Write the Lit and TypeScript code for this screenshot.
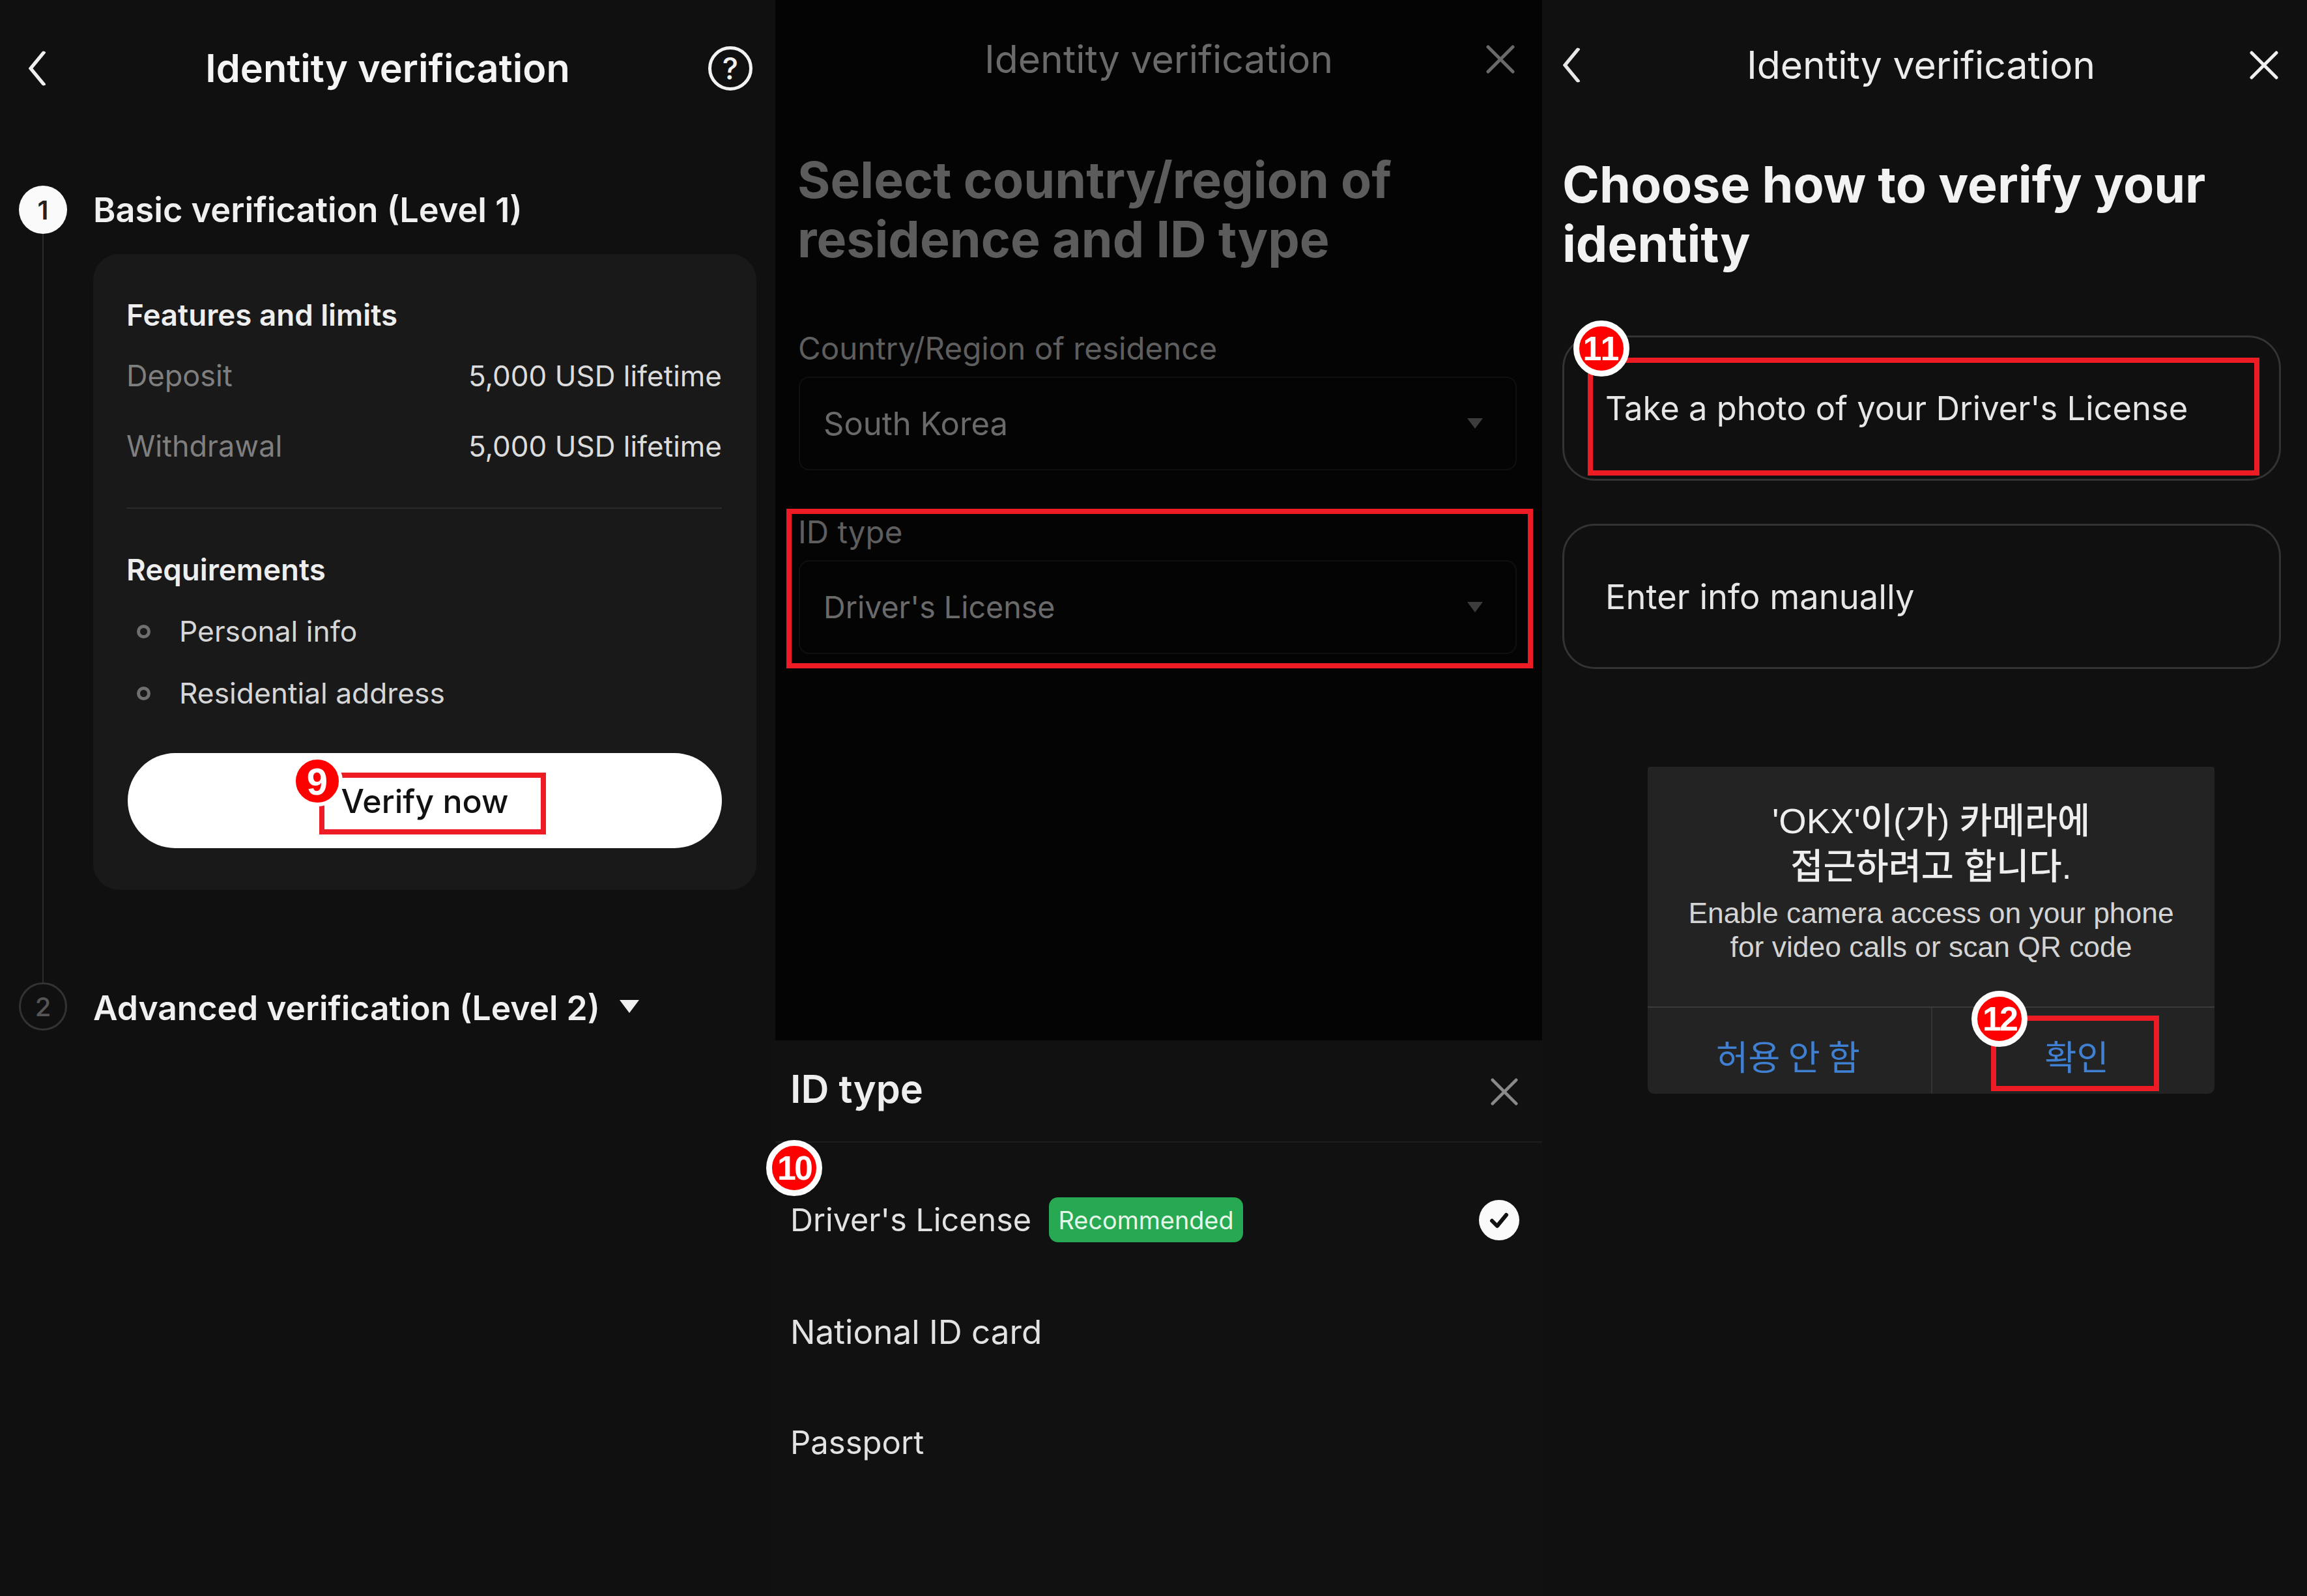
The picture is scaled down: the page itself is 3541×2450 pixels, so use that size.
import { LitElement, html, css, svg } from "lit";
import { customElement } from "lit/decorators.js";

const chevron = svg`<polyline points="24,4 4,39 24,74" fill="none" stroke="currentColor" stroke-width="6" stroke-linecap="round" stroke-linejoin="round"/>`;
const cross = svg`<path d="M3 3 L41 41 M41 3 L3 41" fill="none" stroke="currentColor" stroke-width="5" stroke-linecap="round"/>`;

@customElement("app-root")
export class AppRoot extends LitElement {
  static styles = css`
    :host { display: block; width: 3541px; height: 2450px; overflow: hidden; background: #101010; }
    * { box-sizing: border-box; }
    .root { position: relative; display: flex; width: 3541px; height: 2450px;
      font-family: Inter, "Noto Sans", sans-serif; color: #e8e8e8; }
    .panel { height: 100%; display: flex; flex-direction: column; }
    .p1 { width: 1190px; background: #101010; }
    .p2 { width: 1177px; background: #111; }
    .p3 { width: 1174px; background: #101010; }

    .hdr { display: grid; grid-template-columns: 1fr auto 1fr; align-items: center; flex: none; }
    .hdr .t { font-size: 58.9px; line-height: 70px; white-space: nowrap; text-align: center; }
    .end { justify-self: end; display: flex; }
    .start { justify-self: start; display: flex; }

    /* panel 1 */
    .h1 { height: 210px; padding: 0 37px; color: #f4f4f4; }
    .h1 .t { font-size: 59.4px; font-weight: 600; margin-bottom: 3px; }
    .back1 { width: 28px; height: 54px; margin-left: 6px; color: #f0f0f0; }
    .help { width: 68px; height: 68px; margin-right: -2px; border-radius: 50%; border: 5px solid #f2f2f2; color: #f2f2f2;
      display: flex; align-items: center; justify-content: center; font-size: 46px; font-weight: 500; line-height: 1; }
    .steps { padding: 75px 29px 0; }
    .stephead { display: flex; align-items: center; gap: 40px; height: 74px; }
    .num { width: 74px; height: 74px; border-radius: 50%; flex: none; display: flex; align-items: center; justify-content: center;
      font-size: 40px; font-weight: 600; }
    .num.on { background: #fafafa; color: #222; }
    .num.off { border: 3px solid #333; color: #555; font-weight: 500; }
    .steptitle { font-size: 52.3px; font-weight: 600; line-height: 60px; color: #f0f0f0; white-space: nowrap; }
    .steptitle.low { font-size: 51.6px; padding-top: 3px; }
    .stepbody { margin-left: 36px; border-left: 2px solid #2b2b2b; padding: 31px 0 142px 76px; }
    .card { background: #191919; border-radius: 40px; padding: 64px 53px 64px 51px; }
    .ch { font-size: 45.7px; font-weight: 600; line-height: 60px; color: #eee; white-space: nowrap; }
    .kv { display: flex; justify-content: space-between; font-size: 44px; line-height: 60px; color: #dcdcdc; }
    .kv .k { color: #7f7f7f; font-size: 45px; }
    .kv.a { margin-top: 33px; margin-bottom: 2px; }
    .kv.b { margin-top: 48px; }
    .rule { height: 2px; background: #2a2a2a; margin: 64px 0; }
    .li { display: flex; align-items: center; font-size: 44.3px; line-height: 60px; color: #d6d6d6; }
    .li.a { margin-top: 34px; }
    .li.b { margin-top: 35px; }
    .dot { width: 21px; height: 21px; border-radius: 50%; border: 5px solid #6f6f6f; margin: 0 44px 0 16px; flex: none; }
    .verify { margin: 62px 0 0 2px; height: 146px; border-radius: 73px; background: #fff; color: #111;
      display: flex; align-items: center; justify-content: center; font-size: 50.1px; font-weight: 500; }
    .tri { width: 30px; height: 20px; margin-left: -10px; flex: none; }

    /* panel 2 */
    .dim { background: #040404; height: 1597px; flex: none; padding-left: 35px; padding-right: 39px; color: #666; }
    .h2 { height: 182px; margin-left: -35px; margin-right: -39px; padding: 0 42px; color: #6a6a6a; }
    .x2 { width: 44px; height: 44px; color: #6a6a6a; }
    .bigh { font-size: 77px; font-weight: 700; line-height: 91px; margin: 0; white-space: nowrap; }
    .dim .bigh { color: #5c5c5c; padding-top: 49px; margin-left: -1px; }
    .lab { font-size: 47.5px; line-height: 60px; color: #5e5e5e; white-space: nowrap; }
    .lab.a { margin-top: 92px; }
    .lab.b { margin-top: 65px; }
    .sel { margin-top: 13px; margin-left: 1px; height: 144px; border: 2px solid #101010; border-radius: 16px; padding: 0 50px 0 36px;
      display: flex; align-items: center; justify-content: space-between; font-size: 46.6px; color: #6a6a6a; }
    .sel .wide { font-size: 49px; }
    .caret { width: 24px; height: 16px; }
    .sheet { flex: 1; background: #111; }
    .sh { height: 157px; padding: 0 37px 0 23px; border-bottom: 2px solid #1d1d1d; display: flex; align-items: center; justify-content: space-between; }
    .sh b { font-size: 59.5px; font-weight: 600; line-height: 70px; color: #eee; margin-bottom: 8px; }
    .x3 { width: 42px; height: 42px; color: #8a8a8a; margin-top: 2px; }
    .opts { padding: 33px 35px 0 23px; }
    .opt { height: 171px; display: flex; align-items: center; font-size: 48.5px; color: #e2e2e2; }
    .opt.nat { font-size: 51.2px; }
    .opt.pass { font-size: 49px; }
    .pill { margin-left: 27px; height: 69px; width: 298px; border-radius: 14px; background: #27a853; color: #e4f7e8;
      font-size: 37.8px; display: flex; align-items: center; justify-content: center; }
    .chk { margin-left: auto; width: 62px; height: 62px; }

    /* panel 3 */
    .h3 { height: 200px; padding: 0 44px 0 33px; color: #ececec; }
    .back3 { width: 28px; height: 54px; margin-left: -2px; color: #e8e8e8; }
    .x4 { width: 44px; height: 44px; color: #f0f0f0; }
    .body3 { padding: 38px 40px 0 31px; }
    .body3 .bigh { font-size: 77px; font-weight: 700; color: #f2f2f2; }
    .opt3 { height: 223px; border: 3px solid #333; border-radius: 50px; padding: 0 0 0 63px; display: flex; align-items: center;
      font-size: 50.7px; color: #e6e6e6; white-space: nowrap; }
    .opt3.a { margin-top: 95px; }
    .opt3.b { margin-top: 66px; font-size: 52.5px; }
    .dlg { margin: 150px 0 0 131px; width: 870px; height: 502px; background: #232323; border-radius: 4px 4px 10px 10px;
      font-family: "Liberation Sans", "Noto Sans CJK KR", sans-serif; text-align: center; display: flex; flex-direction: column; }
    .dt { padding-top: 49px; font-size: 54.5px; font-weight: 500; line-height: 70px; color: #eee; }
    .ds { margin-top: 10px; font-size: 44.4px; line-height: 52px; color: #d4d4d4; white-space: nowrap; }
    .da { margin-top: 65px; flex: 1; display: grid; grid-template-columns: 437px 1fr; border-top: 2px solid #3a3a3a;
      font-family: "Noto Sans CJK KR", sans-serif; font-size: 53.5px; color: #3f80d2; }
    .da div { display: flex; align-items: center; justify-content: center; padding-top: 12px; }
    .da div:first-child { border-right: 2px solid #333; padding-right: 4px; }
    .da div:last-child { padding-left: 10px; }

    /* annotations */
    .box { position: absolute; border: 8px solid #ed1c24; }
    .bx9 { left: 490px; top: 1186px; width: 348px; height: 95px; }
    .bx10 { left: 1207px; top: 781px; width: 1146px; height: 245px; }
    .bx11 { left: 2437px; top: 549px; width: 1031px; height: 181px; }
    .bx12 { left: 3056px; top: 1559px; width: 258px; height: 116px; }
    .badge { position: absolute; width: 86px; height: 86px; border-radius: 50%; background: #f00; border: 9px solid #fff;
      color: #fff; font-family: "Liberation Sans", sans-serif; font-weight: 700; font-size: 52px; letter-spacing: -3px;
      display: flex; align-items: center; justify-content: center; }
    .b9 { left: 448px; top: 1160px; width: 78px; height: 78px; border-width: 6px; font-size: 58px; letter-spacing: 0; }
    .b10 { left: 1176px; top: 1750px; }
    .b11 { left: 2415px; top: 492px; letter-spacing: 1px; }
    .b12 { left: 3026px; top: 1521px; }
  `;

  render() {
    return html`<div class="root">
      <section class="panel p1">
        <div class="hdr h1">
          <svg class="start back1" viewBox="0 0 28 78" preserveAspectRatio="none">${chevron}</svg>
          <div class="t">Identity verification</div>
          <div class="end"><div class="help">?</div></div>
        </div>
        <div class="steps">
          <div class="stephead"><div class="num on">1</div><div class="steptitle">Basic verification (Level 1)</div></div>
          <div class="stepbody">
            <div class="card">
              <div class="ch">Features and limits</div>
              <div class="kv a"><span class="k">Deposit</span><span>5,000 USD lifetime</span></div>
              <div class="kv b"><span class="k">Withdrawal</span><span>5,000 USD lifetime</span></div>
              <div class="rule"></div>
              <div class="ch">Requirements</div>
              <div class="li a"><i class="dot"></i>Personal info</div>
              <div class="li b"><i class="dot"></i>Residential address</div>
              <div class="verify">Verify now</div>
            </div>
          </div>
          <div class="stephead">
            <div class="num off">2</div>
            <div class="steptitle low">Advanced verification (Level 2)</div>
            <svg class="tri" viewBox="0 0 30 20"><path d="M0 0H30L15 20Z" fill="#f0f0f0"/></svg>
          </div>
        </div>
      </section>

      <section class="panel p2">
        <div class="dim">
          <div class="hdr h2">
            <span></span>
            <div class="t">Identity verification</div>
            <svg class="end x2" viewBox="0 0 44 44">${cross}</svg>
          </div>
          <h1 class="bigh">Select country/region of<br />residence and ID type</h1>
          <div class="lab a">Country/Region of residence</div>
          <div class="sel"><span class="wide">South Korea</span><svg class="caret" viewBox="0 0 24 16"><path d="M0 0H24L12 16Z" fill="#3c3c3c"/></svg></div>
          <div class="lab b">ID type</div>
          <div class="sel"><span>Driver's License</span><svg class="caret" viewBox="0 0 24 16"><path d="M0 0H24L12 16Z" fill="#3c3c3c"/></svg></div>
        </div>
        <div class="sheet">
          <div class="sh"><b>ID type</b><svg class="x3" viewBox="0 0 44 44">${cross}</svg></div>
          <div class="opts">
            <div class="opt">Driver's License<span class="pill">Recommended</span>
              <svg class="chk" viewBox="0 0 62 62"><circle cx="31" cy="31" r="31" fill="#fafafa"/><path d="M20 32 L28 40 L42 23" fill="none" stroke="#111" stroke-width="6" stroke-linecap="round" stroke-linejoin="round"/></svg>
            </div>
            <div class="opt nat">National ID card</div>
            <div class="opt pass">Passport</div>
          </div>
        </div>
      </section>

      <section class="panel p3">
        <div class="hdr h3">
          <svg class="start back3" viewBox="0 0 28 78" preserveAspectRatio="none">${chevron}</svg>
          <div class="t">Identity verification</div>
          <svg class="end x4" viewBox="0 0 44 44">${cross}</svg>
        </div>
        <div class="body3">
          <h1 class="bigh">Choose how to verify your<br />identity</h1>
          <div class="opt3 a">Take a photo of your Driver's License</div>
          <div class="opt3 b">Enter info manually</div>
          <div class="dlg">
            <div class="dt">'OKX'이(가) 카메라에<br />접근하려고 합니다.</div>
            <div class="ds">Enable camera access on your phone<br />for video calls or scan QR code</div>
            <div class="da"><div>허용 안 함</div><div>확인</div></div>
          </div>
        </div>
      </section>

      <div class="box bx9"></div>
      <div class="box bx10"></div>
      <div class="box bx11"></div>
      <div class="box bx12"></div>
      <div class="badge b9">9</div>
      <div class="badge b10">10</div>
      <div class="badge b11">11</div>
      <div class="badge b12">12</div>
    </div>`;
  }
}
